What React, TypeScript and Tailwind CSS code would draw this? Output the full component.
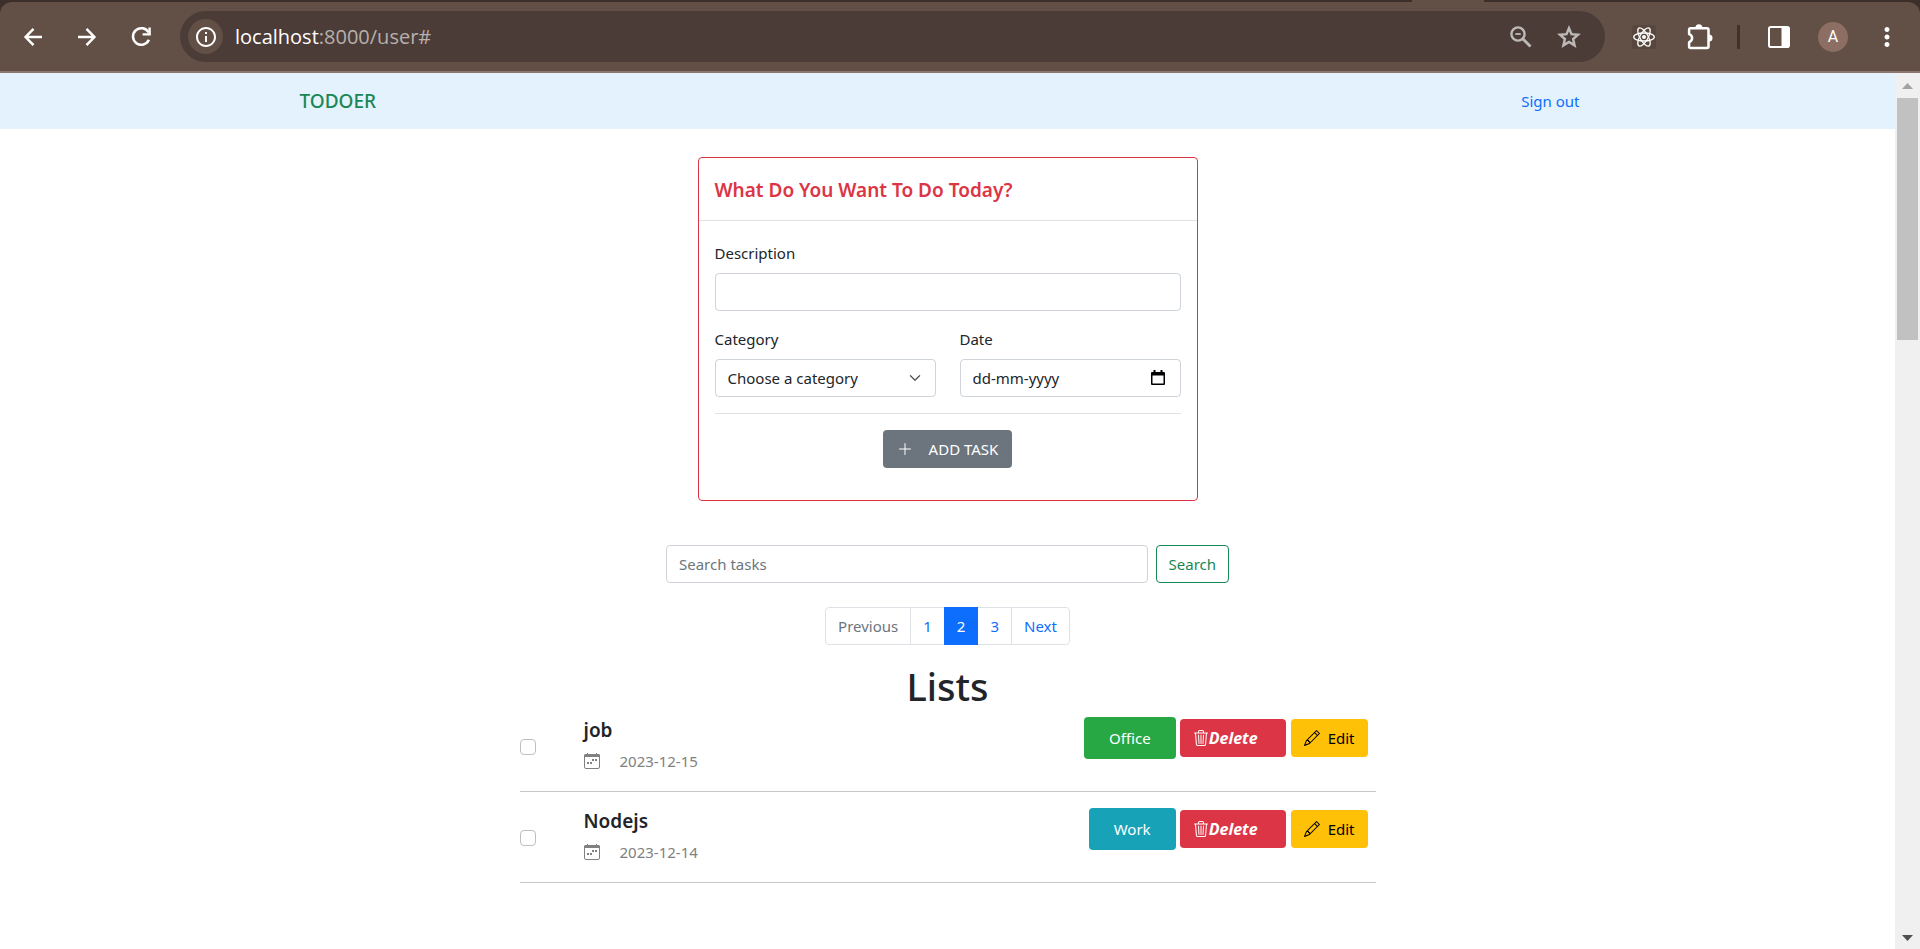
import type { ReactNode } from "react";
import { BsChevronDown, BsPencil, BsPlusLg, BsTrash3 } from "react-icons/bs";
import { MdMoreVert, MdOutlineInfo } from "react-icons/md";

const fieldClass =
  "h-[38px] w-full rounded border border-[#ced4da] bg-white px-3 text-[#212529] outline-none placeholder:text-[#6c757d]";

type Task = {
  id: number;
  title: string;
  date: string;
  category: string;
  categoryClass: string;
};

const tasks: Task[] = [
  { id: 1, title: "job", date: "2023-12-15", category: "Office", categoryClass: "bg-[#28a745]" },
  { id: 2, title: "Nodejs", date: "2023-12-14", category: "Work", categoryClass: "bg-[#17a2b8]" },
];

function BackIcon() {
  return (
    <svg width="24" height="24" viewBox="0 0 24 24" fill="none" stroke="#fff" strokeWidth="2.5" aria-hidden="true">
      <path d="M21 12H5M12.500 3.900L4.600 12l7.900 8.100" />
    </svg>
  );
}

function ForwardIcon() {
  return (
    <svg width="24" height="24" viewBox="0 0 24 24" fill="none" stroke="#fff" strokeWidth="2.5" aria-hidden="true">
      <path d="M3 12h16M11.500 3.900l7.900 8.100-7.900 8.100" />
    </svg>
  );
}

function ReloadIcon() {
  return (
    <svg width="26" height="26" viewBox="0 0 26 26" aria-hidden="true">
      <path d="M20.600 8.500A8.300 8.300 0 1 0 20.900 15.800" fill="none" stroke="#fff" strokeWidth="2.500" />
      <path d="M22.800 3.400v8.200h-8.200V9.200h5.800V3.400z" fill="#fff" />
    </svg>
  );
}

function StarIcon() {
  return (
    <svg width="28" height="28" viewBox="0 0 28 28" fill="none" stroke="#bdb9b6" strokeWidth="2.400" aria-hidden="true">
      <path d="M14 5.200l2.500 6 6.500.6-4.900 4.200 1.500 6.400-5.600-3.400-5.600 3.400 1.500-6.400L5 11.800l6.500-.6z" />
    </svg>
  );
}

function ZoomOutIcon() {
  return (
    <svg width="24" height="24" viewBox="0 0 24 24" fill="none" stroke="#bdb9b6" strokeWidth="2.4" aria-hidden="true">
      <circle cx="9" cy="9" r="6.6" />
      <path d="M14 14l7.5 7.5" strokeWidth="2.8" />
      <path d="M6.3 9h5.4" strokeWidth="1.8" />
    </svg>
  );
}

function AtomIcon() {
  return (
    <svg width="24" height="24" viewBox="0 0 24 24" fill="none" stroke="#fff" strokeWidth="1.3" aria-hidden="true">
      <rect width="24" height="24" rx="2" fill="#57473e" stroke="none" />
      <ellipse cx="12" cy="12" rx="10.3" ry="4" />
      <ellipse cx="12" cy="12" rx="10.3" ry="4" transform="rotate(60 12 12)" />
      <ellipse cx="12" cy="12" rx="10.3" ry="4" transform="rotate(120 12 12)" />
      <circle cx="12" cy="12" r="2" fill="#fff" stroke="none" />
    </svg>
  );
}

function PuzzleIcon() {
  return (
    <svg width="26" height="26" viewBox="0 0 26 26" aria-hidden="true">
      <path
        d="M3.600 4.200h16.400a1.500 1.500 0 0 1 1.500 1.500V22.500a1.500 1.500 0 0 1-1.500 1.500H3.600A1.500 1.500 0 0 1 2.100 22.500v-4.400c2-.6 3-2 3-4s-1-3.400-3-4V5.700A1.500 1.500 0 0 1 3.600 4.200z"
        fill="none"
        stroke="#fff"
        strokeWidth="2.500"
        strokeLinejoin="round"
      />
      <path d="M8.400 3.800a3.500 3.500 0 0 1 7 0z" fill="#fff" />
      <path d="M22 10.600a3.500 3.500 0 0 1 0 7z" fill="#fff" />
    </svg>
  );
}

function SidePanelIcon() {
  return (
    <svg width="24" height="24" viewBox="0 0 24 24" aria-hidden="true">
      <rect x="2" y="2" width="20" height="20" rx="1.800" fill="none" stroke="#fff" strokeWidth="2" />
      <path d="M14.500 2H22v20h-7.500z" fill="#fff" />
    </svg>
  );
}

function DateIcon() {
  return (
    <svg width="14" height="16" viewBox="0 0 14 16" aria-hidden="true">
      <path d="M2.500 0h2v2h5V0h2v2H13a1 1 0 0 1 1 1v11a1 1 0 0 1-1 1H1a1 1 0 0 1-1-1V3a1 1 0 0 1 1-1h1.500zM1.500 5.500v8h11v-8z" fill="#000" />
    </svg>
  );
}

function DueDateIcon() {
  return (
    <svg width="16" height="16" viewBox="0 0 16 16" aria-hidden="true">
      <rect x="0.500" y="1.500" width="15" height="14" rx="1.500" fill="none" stroke="currentColor" />
      <path d="M0 4V2.500A1.500 1.500 0 0 1 1.500 1H3V0h1v1h8V0h1v1h1.500A1.500 1.500 0 0 1 16 2.500V4z" fill="currentColor" />
      <path d="M11 6h2v2h-2zM8 6h2v2H8zM3 9h2v2H3zM6 9h2v2H6z" fill="currentColor" />
    </svg>
  );
}

function ChromeButton({ label, children, className = "" }: { label: string; children: ReactNode; className?: string }) {
  return (
    <button type="button" aria-label={label} className={`flex shrink-0 items-center justify-center ${className}`}>
      {children}
    </button>
  );
}

function BrowserBar() {
  return (
    <header className="shrink-0 bg-[#3c2f29]">
      <div className="flex h-[2px] justify-end pr-[436px]">
        <div className="w-[72px] bg-[#625046]" />
      </div>
      <div className="flex h-[71px] items-center rounded-t-xl border-b-2 border-[#8b776d] bg-[#625046] pr-[18px] pl-[21px] text-white">
        <div className="flex items-center gap-[30px]">
          <ChromeButton label="Back"><BackIcon /></ChromeButton>
          <ChromeButton label="Forward"><ForwardIcon /></ChromeButton>
          <ChromeButton label="Reload" className="-ml-px"><ReloadIcon /></ChromeButton>
        </div>
        <div className="ml-[26px] flex h-[51px] min-w-0 flex-1 items-center rounded-full bg-[#4b3c38] pr-[22px] pl-2">
          <ChromeButton label="View site information" className="size-[35px] rounded-full bg-[#625046]">
            <MdOutlineInfo className="size-6" />
          </ChromeButton>
          <div className="ml-3 flex-1 font-['Open_Sans',sans-serif] text-[20px] leading-8 whitespace-nowrap text-[#b7b0ad]">
            <span className="text-white">localhost</span>:8000/user#
          </div>
          <div className="flex items-center gap-[22px]">
            <ChromeButton label="Zoom"><ZoomOutIcon /></ChromeButton>
            <ChromeButton label="Bookmark this tab"><StarIcon /></ChromeButton>
          </div>
        </div>
        <div className="ml-[27px] flex items-center">
          <ChromeButton label="React Developer Tools"><AtomIcon /></ChromeButton>
          <ChromeButton label="Extensions" className="ml-[31px]"><PuzzleIcon /></ChromeButton>
          <div className="ml-[24px] h-6 w-[3px] bg-[#3f322c]" />
          <ChromeButton label="Side panel" className="ml-[27px]"><SidePanelIcon /></ChromeButton>
          <ChromeButton label="Profile" className="ml-[27px] size-[30px] rounded-full bg-[#8d6e63] font-[Roboto] text-[16px]">A</ChromeButton>
          <ChromeButton label="Menu" className="ml-[24px]"><MdMoreVert className="size-[30px]" /></ChromeButton>
        </div>
      </div>
    </header>
  );
}

function Scrollbar() {
  return (
    <div aria-hidden="true" className="flex w-[25px] shrink-0 flex-col items-center bg-[#f0f0f0] pt-[10px] pb-2">
      <svg width="11" height="6" viewBox="0 0 11 6"><path d="M0 6l5.500-6L11 6z" fill="#a3a3a3" /></svg>
      <div className="mt-[9px] h-[242px] w-[21px] bg-[#c1c1c1]" />
      <svg className="mt-auto" width="11" height="6" viewBox="0 0 11 6"><path d="M0 0l5.500 6L11 0z" fill="#505050" /></svg>
    </div>
  );
}

function TaskForm() {
  return (
    <section className="mx-auto mt-7 w-full max-w-[500px] rounded border border-[#dc3545]">
      <div className="border-b border-[#dee2e6] px-4 pt-5 pb-[18px]">
        <h2 className="text-[19px] leading-6 font-semibold text-[#dc3545]">What Do You Want To Do Today?</h2>
      </div>
      <form className="px-4 pt-5 pb-8" onSubmit={(e) => e.preventDefault()}>
        <label htmlFor="description" className="mb-2 block">Description</label>
        <input id="description" type="text" className={fieldClass} />
        <div className="mt-4 grid grid-cols-2 gap-6">
          <div>
            <label htmlFor="category" className="mb-2 block">Category</label>
            <div className="relative">
              <select id="category" className={`${fieldClass} appearance-none`}>
                <option>Choose a category</option>
                <option>Office</option>
                <option>Work</option>
              </select>
              <BsChevronDown className="pointer-events-none absolute top-[13px] right-[15px] size-3 stroke-current stroke-[0.8] text-[#343a40]" />
            </div>
          </div>
          <div>
            <label htmlFor="date" className="mb-2 block">Date</label>
            <div className={`${fieldClass} flex items-center`}>
              <input id="date" type="text" placeholder="dd-mm-yyyy" className="min-w-0 flex-1 outline-none placeholder:text-[#212529]" />
              <button type="button" aria-label="Show date picker" className="mr-[3px]"><DateIcon /></button>
            </div>
          </div>
        </div>
        <hr className="my-4 border-[#dee2e6]" />
        <button type="submit" className="mx-auto flex h-[38px] items-center gap-4 rounded bg-[#6c757d] px-[14px] text-white">
          <BsPlusLg className="size-4" />
          ADD TASK
        </button>
      </form>
    </section>
  );
}

function SearchForm() {
  return (
    <form className="mx-auto mt-11 flex w-full max-w-[563px] gap-2" onSubmit={(e) => e.preventDefault()}>
      <input type="search" aria-label="Search tasks" placeholder="Search tasks" className={fieldClass} />
      <button type="submit" className="h-[38px] rounded border border-[#198754] px-3 text-[#198754]">Search</button>
    </form>
  );
}

function Pagination() {
  return (
    <nav aria-label="Pages" className="mt-6">
      <ul className="flex justify-center leading-6 text-[#0d6efd]">
        <li><a href="#prev" className="block rounded-l border border-[#dee2e6] px-3 py-[6px] text-[#6c757d]">Previous</a></li>
        <li><a href="#1" className="-ml-px block border border-[#dee2e6] px-3 py-[6px]">1</a></li>
        <li><a href="#2" aria-current="page" className="relative -ml-px block border border-[#0d6efd] bg-[#0d6efd] px-3 py-[6px] text-white">2</a></li>
        <li><a href="#3" className="-ml-px block border border-[#dee2e6] px-3 py-[6px]">3</a></li>
        <li><a href="#next" className="-ml-px block rounded-r border border-[#dee2e6] px-3 py-[6px]">Next</a></li>
      </ul>
    </nav>
  );
}

function TaskRow({ task }: { task: Task }) {
  return (
    <li className="flex items-center border-b border-[#c6c7c8] pb-[14px]">
      <input
        type="checkbox"
        aria-label={`Mark ${task.title} as done`}
        className="size-4 appearance-none rounded border border-[#bfbfbf] bg-white checked:bg-[#0d6efd]"
      />
      <div className="ml-12 flex-1 pb-1">
        <h3 className="mb-[6px] text-[19px] leading-[26px] font-semibold">{task.title}</h3>
        <p className="flex items-center text-[#808080]">
          <DueDateIcon />
          <span className="ml-5">{task.date}</span>
        </p>
      </div>
      <div className="flex items-center gap-1 self-start pr-2">
        <span className={`rounded px-[25px] py-[9px] text-white ${task.categoryClass}`}>{task.category}</span>
        <button type="button" className="flex h-[38px] w-[106px] items-center rounded bg-[#dc3545] pl-[13px] text-base font-bold text-white italic">
          <BsTrash3 className="size-4" />
          Delete
        </button>
        <button type="button" className="ml-px flex h-[38px] items-center gap-2 rounded bg-[#ffc107] px-[13px] text-black">
          <BsPencil className="size-4" />
          Edit
        </button>
      </div>
    </li>
  );
}

export default function App() {
  return (
    <div className="flex min-h-screen flex-col bg-white font-['Noto_Sans','Open_Sans',sans-serif] text-[15px] leading-6 text-[#212529]">
      <BrowserBar />
      <div className="flex flex-1">
        <div className="min-w-0 flex-1">
          <nav className="bg-[#e3f2fd]">
            <div className="mx-auto flex h-14 max-w-[1320px] items-center justify-between pr-7 pl-3">
              <a href="#home" className="text-[19px] font-medium text-[#198754]">TODOER</a>
              <a href="#signout" className="text-[#0d6efd]">Sign out</a>
            </div>
          </nav>
          <main>
            <TaskForm />
            <SearchForm />
            <Pagination />
            <h1 className="mt-[17px] mb-[7px] text-center text-[38px] leading-[48px] font-medium">Lists</h1>
            <ul className="mx-auto flex max-w-[856px] flex-col gap-4">
              {tasks.map((task) => (
                <TaskRow key={task.id} task={task} />
              ))}
            </ul>
          </main>
        </div>
        <Scrollbar />
      </div>
    </div>
  );
}
